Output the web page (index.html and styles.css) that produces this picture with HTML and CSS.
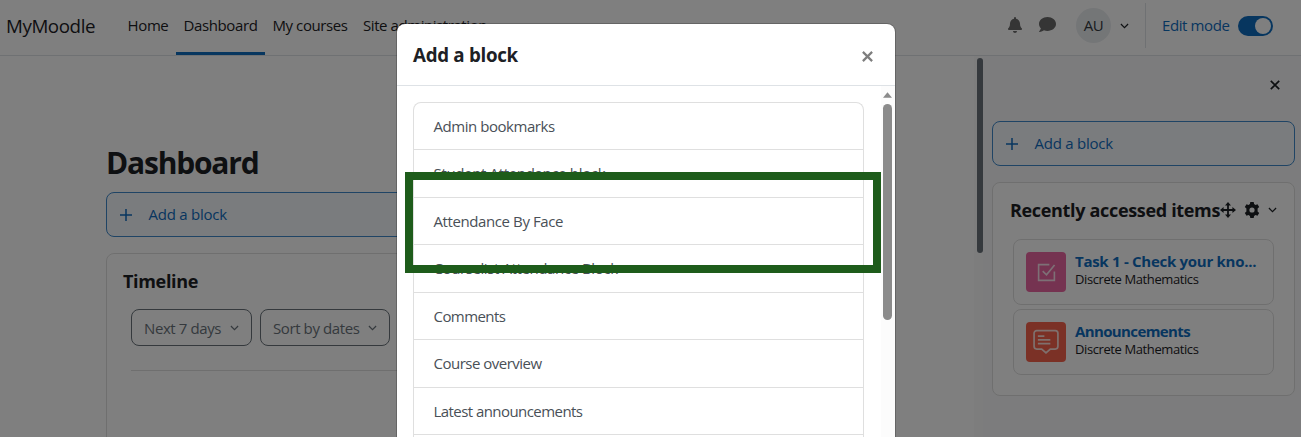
FILE: index.html
```html
<!DOCTYPE html>
<html lang="en">
<head>
<meta charset="utf-8">
<title>Dashboard | MyMoodle</title>
<link rel="stylesheet" href="styles.css">
</head>
<body>
<div class="page">
  <header class="navbar">
    <a class="brand">MyMoodle</a>
    <nav class="nav">
      <a class="nav-item home">Home</a>
      <a class="nav-item dash active">Dashboard</a>
      <a class="nav-item courses">My courses</a>
      <a class="nav-item admin">Site administration</a>
    </nav>
    <div class="tools">
      <svg class="bell" viewBox="0 0 448 512"><path d="M224 512c35.300 0 64-28.700 64-64H160c0 35.300 28.700 64 64 64zm215.400-149.700c-19.300-20.800-55.500-52-55.500-154.300 0-77.700-54.500-139.900-127.900-155.200V32a32 32 0 1 0-64 0v20.800C118.600 68.100 64.100 130.300 64.100 208c0 102.300-36.200 133.500-55.500 154.300A31.300 31.300 0 0 0 0 384c.1 16.400 13 32 32.100 32h383.800c19.100 0 32-15.600 32.100-32a31.300 31.300 0 0 0-8.600-21.700z"/></svg>
      <svg class="comment" viewBox="0 32 512 448"><path d="M256 32C114.600 32 0 125.100 0 240c0 49.600 21.400 95 57 130.700C44.500 421.100 2.700 466 2.200 466.500A8 8 0 0 0 8 480c66.300 0 116-31.800 140.600-51.400A305 305 0 0 0 256 448c141.400 0 256-93.100 256-208S397.400 32 256 32z"/></svg>
      <span class="avatar">AU</span>
      <svg class="chev" viewBox="0 0 10 6"><path d="M1 .8 5 4.800 9 .8"/></svg>
      <div class="edit"><span class="edit-label">Edit mode</span><span class="switch"></span></div>
    </div>
  </header>
  <div class="columns">
    <main class="main">
      <h1>Dashboard</h1>
      <div class="add-block"><svg class="plus" viewBox="0 0 12 12"><path d="M6 0v12M0 6h12"/></svg><span>Add a block</span></div>
      <section class="card timeline">
        <h2>Timeline</h2>
        <div class="filters">
          <span class="filter days"><span>Next 7 days</span><svg class="chev" viewBox="0 0 10 6"><path d="M1 .8 5 4.800 9 .8"/></svg></span>
          <span class="filter sort"><span>Sort by dates</span><svg class="chev" viewBox="0 0 10 6"><path d="M1 .8 5 4.800 9 .8"/></svg></span>
        </div>
        <hr>
      </section>
    </main>
    <div class="page-scroll"><div class="page-thumb"></div></div>
    <aside class="drawer">
      <div class="drawer-head"><svg class="close" viewBox="0 0 10 10"><path d="M.8 .8 9.200 9.200M9.200 .8 .8 9.200"/></svg></div>
      <div class="add-block"><svg class="plus" viewBox="0 0 12 12"><path d="M6 0v12M0 6h12"/></svg><span>Add a block</span></div>
      <section class="card recent">
        <div class="recent-head">
          <h2>Recently accessed items</h2>
          <svg class="move" viewBox="0 0 16 16"><path d="M8 2v12M2 8h12" stroke="currentColor" stroke-width="1.800"/><path d="M8 0l3 3.600H5zM8 16l3-3.600H5zM0 8l3.600-3v6zM16 8l-3.600-3v6z" fill="currentColor"/></svg>
          <svg class="gear" viewBox="0 0 16 16"><path fill-rule="evenodd" d="M6.300 0h3.400l.4 2.100 1.400.8 2-.7 1.700 2.900-1.600 1.400v3l1.600 1.400-1.700 2.900-2-.7-1.400.8-.4 2.100H6.300l-.4-2.100-1.400-.8-2 .7L.8 10.900l1.600-1.400v-3L.8 5.100l1.700-2.900 2 .7 1.400-.8zM8 5.400a2.600 2.600 0 1 0 0 5.200 2.600 2.600 0 0 0 0-5.200z"/></svg>
          <svg class="chev" viewBox="0 0 10 6"><path d="M1 .8 5 4.800 9 .8"/></svg>
        </div>
        <div class="item">
          <span class="item-icon pink"><svg viewBox="0 0 20 20"><path d="M13 1.700H1.700v16.600h16.600V9M6 8.500l4 4 8.500-10.500"/></svg></span>
          <div class="item-text"><div class="item-title">Task 1 - Check your kno...</div><div class="item-sub">Discrete Mathematics</div></div>
        </div>
        <div class="item">
          <span class="item-icon orange"><svg class="forum" viewBox="0 0 24 24"><path d="M3.500 1.500h17a2.500 2.500 0 0 1 2.500 2.500v12a2.500 2.500 0 0 1-2.500 2.500H16L12 22l-4-3.500H3.500A2.500 2.500 0 0 1 1 16V4a2.500 2.500 0 0 1 2.500-2.500zM4.500 6.500h6M4.500 10h11.500M4.500 13.500h11.500"/></svg></span>
          <div class="item-text"><div class="item-title ann">Announcements</div><div class="item-sub">Discrete Mathematics</div></div>
        </div>
      </section>
    </aside>
  </div>
</div>
<div class="backdrop"></div>
<div class="modal">
  <div class="modal-head"><h3>Add a block</h3><svg class="close" viewBox="0 0 10 10"><path d="M.8 .8 9.200 9.200M9.200 .8 .8 9.200"/></svg></div>
  <div class="modal-body">
    <ul class="list">
      <li>Admin bookmarks</li>
      <li class="wide">Student Attendance block</li>
      <li>Attendance By Face</li>
      <li>Courselist Attendance Block</li>
      <li class="tight">Comments</li>
      <li class="overview">Course overview</li>
      <li class="tight">Latest announcements</li>
    </ul>
    <div class="track"><svg class="arrow" viewBox="0 0 10 6"><path d="M5 0l5 6H0z"/></svg><div class="thumb"></div></div>
  </div>
</div>
<div class="highlight"></div>
</body>
</html>
```
FILE: styles.css
```css
* { box-sizing: border-box; }
html, body { height: 100%; }
body { margin: 0; overflow: hidden; background: #fff; color: #1d2125; font: 15px/22px "Open Sans", "Noto Sans", sans-serif; letter-spacing: -0.4px; }
h1, h2, h3, ul { margin: 0; padding: 0; }
span, a, h1, h2, h3 { white-space: nowrap; }
svg { display: block; flex: none; }
.page { width: 1301px; height: 437px; display: flex; flex-direction: column; overflow: hidden; }

.navbar { height: 56px; flex: none; display: flex; align-items: center; border-bottom: 1px solid #dee2e6; padding: 0 28px 4px 6px; }
.brand { width: 114px; font-size: 18.750px; letter-spacing: -0.420px; }
.nav { display: flex; align-self: stretch; }
.nav-item { height: 55px; display: flex; align-items: center; justify-content: center; border-bottom: 3px solid transparent; padding-bottom: 2px; }
.nav-item.active { border-color: #0f6cbf; }
.home { width: 56px; }
.dash { width: 89px; }
.courses { width: 90px; }
.admin { width: 140px; letter-spacing: -0.430px; }
.tools { margin-left: auto; display: flex; align-items: center; }
.bell { width: 14px; height: 16px; margin-right: 17px; margin-top: -2px; fill: #6a6a6a; }
.comment { width: 17px; height: 15px; margin-right: 20px; margin-top: -2px; fill: #6a6a6a; }
.avatar { width: 35px; height: 35px; border-radius: 50%; background: #e9ecef; display: flex; align-items: center; justify-content: center; margin-right: 9px; padding-bottom: 1px; color: #343a40; }
.chev { width: 9px; height: 6px; fill: none; stroke: currentColor; stroke-width: 1.300; }
.edit { margin-left: 16px; height: 45px; border-left: 1px solid #dee2e6; padding-left: 16px; display: flex; align-items: center; gap: 8px; color: #0f6cbf; }
.edit-label { width: 68px; padding-bottom: 2px; }
.switch { width: 35px; height: 20px; border-radius: 10px; background: #0f6cbf; padding: 2px; display: flex; justify-content: flex-end; }
.switch::after { content: ""; width: 16px; height: 16px; border-radius: 50%; background: #fff; }

.columns { flex: 1; display: flex; min-height: 0; }
.main { width: 974px; flex: none; padding: 86px 80px 0 106px; overflow: hidden; }
h1 { font-size: 30px; line-height: 42px; font-weight: 700; letter-spacing: -1.200px; margin-bottom: 8px; }
.add-block { height: 45px; border: 1px solid #3f89cb; border-radius: 8px; background: #f5f9fc; color: #0f6cbf; display: flex; align-items: center; gap: 16.500px; padding-left: 13px; letter-spacing: -0.250px; }
.add-block span { padding-bottom: 2px; }
.plus { width: 12px; height: 12px; stroke: currentColor; stroke-width: 1.500; }
.card { border: 1px solid #dfdfdf; border-radius: 8px; background: #fff; }
.timeline { height: 240px; margin-top: 16px; padding: 15px 24px 0; }
h2 { font-size: 18px; line-height: 24px; font-weight: 700; letter-spacing: -0.330px; }
.timeline h2 { margin-left: -8px; }
.filters { display: flex; gap: 8px; margin-top: 16px; }
.filter { height: 37px; border: 1px solid #6a737b; border-radius: 8px; padding: 0 12px 0 12px; display: flex; align-items: center; justify-content: space-between; color: #6a737b; }
.days { width: 121px; }
.sort { width: 130px; }
hr { border: 0; border-top: 1px solid #dfdfdf; margin: 24px 0 0; }
.page-scroll { width: 9px; flex: none; background: #fafafa; padding: 2px 0 0 3px; }
.page-thumb { width: 6px; height: 195px; border-radius: 3px; background: #6a737b; }
.drawer { width: 318px; flex: none; background: #f8f9fa; padding: 0 6px 0 9px; }
.drawer-head { height: 65px; display: flex; justify-content: flex-end; padding: 24px 15px 0 0; }
.close { width: 10px; height: 10px; stroke: currentColor; stroke-width: 1.700; }
.recent { height: 214px; margin-top: 16px; padding: 15px 20px 0; }
.recent-head { display: flex; align-items: center; height: 24px; margin: 0 -3px 17px; }
.recent-head h2 { width: 211px; }
.move { width: 16px; height: 16px; margin-right: 8px; }
.gear { width: 16px; height: 16px; margin-right: 8px; fill: currentColor; }
.item { width: 261px; height: 66px; margin-bottom: 4px; border: 1px solid #dfdfdf; border-radius: 8px; padding: 0 12px; display: flex; align-items: center; gap: 9px; }
.item-text { padding-bottom: 4px; }
.item-icon { width: 40px; height: 40px; flex: none; border-radius: 4px; display: flex; align-items: center; justify-content: center; }
.item-icon svg { width: 19px; height: 19px; fill: none; stroke: #fff; stroke-opacity: .8; stroke-width: 1.700; }
.item-icon .forum { width: 26px; height: 26px; stroke-width: 1.600; }
.pink { background: #eb66a2; }
.orange { background: #f7634d; }
.item-title { font-weight: 700; color: #0f6cbf; line-height: 19px; white-space: nowrap; letter-spacing: -0.280px; }
.ann { letter-spacing: -0.620px; }
.item-sub { font-size: 13px; line-height: 17px; white-space: nowrap; }

.backdrop { position: absolute; top: 0; left: 0; width: 1301px; height: 437px; background: rgba(0,0,0,.5); }
.modal { position: absolute; left: 396px; top: 23px; width: 500px; height: 414px; border: 1px solid rgba(0,0,0,.2); border-bottom: 0; border-radius: 9px 9px 0 0; background: #fff; background-clip: padding-box; overflow: hidden; }
.modal-head { height: 62px; border-bottom: 1px solid #dee2e6; display: flex; align-items: center; justify-content: space-between; padding: 0 22px 0 16px; }
.modal-head .close { width: 11px; height: 11px; margin-top: 4px; color: #7e7e7e; stroke-width: 2; }
h3 { font-size: 18.750px; font-weight: 700; letter-spacing: -0.300px; }
.modal-body { height: 351px; display: flex; justify-content: space-between; }
.list { list-style: none; width: 451px; height: 335px; margin: 16px 0 0 16px; border: 1px solid #dfdfdf; border-bottom: 0; border-radius: 8px 8px 0 0; }
.list li { height: 47.500px; border-bottom: 1px solid #dfdfdf; padding: 0 20px 0 19.500px; display: flex; align-items: center; color: #495057; }
.list li:first-child { height: 47px; letter-spacing: -0.450px; }
.list .wide { letter-spacing: -0.340px; }
.list .tight { letter-spacing: -0.560px; }
.list .overview { letter-spacing: -0.500px; }
.track { width: 14px; height: 351px; background: #fcfcfc; padding: 6px 3px 0 2px; }
.arrow { width: 9px; height: 6px; fill: #8b8b8b; }
.thumb { height: 216px; margin-top: 6px; border-radius: 5px; background: #8b8b8b; }
.highlight { position: absolute; left: 405px; top: 172px; width: 476px; height: 101px; border: 8px solid #1e5c1b; }
```
